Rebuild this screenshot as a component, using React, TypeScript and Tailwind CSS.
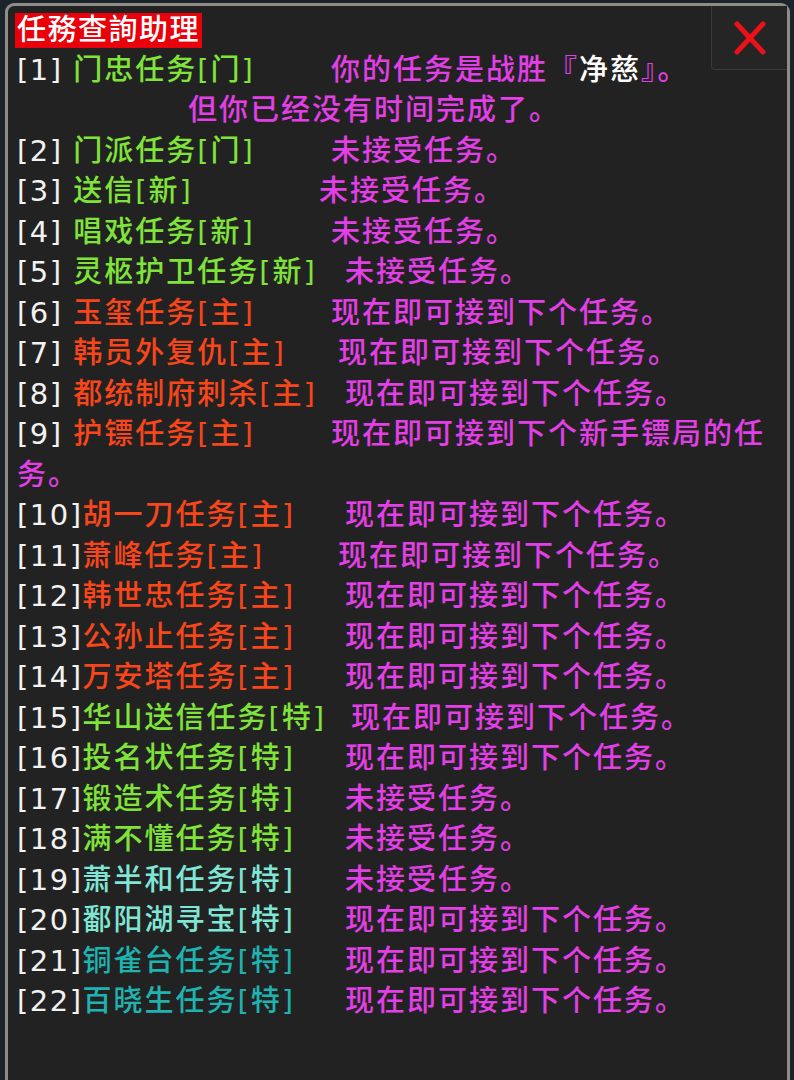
import type { ReactNode } from "react";

type Row = {
  no: string;
  name: string;
  tone: string;
  pad: string;
  status: ReactNode;
  more?: { text: string; indent: string };
};

const GREEN = "text-[#80e33a]";
const ORANGE = "text-[#f8461a]";
const AQUA = "text-[#7fe6d6]";
const TEAL = "text-[#1fb3b0]";

const NOT_TAKEN = "未接受任务。";
const NEXT = "现在即可接到下个任务。";

const rows: Row[] = [
  {
    no: "[1] ",
    name: "门忠任务[门]",
    tone: GREEN,
    pad: "w-[314px]",
    status: (
      <>
        你的任务是战胜『<span className="text-white">净慈</span>』。
      </>
    ),
    more: { text: "但你已经没有时间完成了。", indent: "pl-[171px]" },
  },
  { no: "[2] ", name: "门派任务[门]", tone: GREEN, pad: "w-[314px]", status: NOT_TAKEN },
  { no: "[3] ", name: "送信[新]", tone: GREEN, pad: "w-[302px]", status: NOT_TAKEN },
  { no: "[4] ", name: "唱戏任务[新]", tone: GREEN, pad: "w-[314px]", status: NOT_TAKEN },
  { no: "[5] ", name: "灵柩护卫任务[新]", tone: GREEN, pad: "w-[328px]", status: NOT_TAKEN },
  { no: "[6] ", name: "玉玺任务[主]", tone: ORANGE, pad: "w-[314px]", status: NEXT },
  { no: "[7] ", name: "韩员外复仇[主]", tone: ORANGE, pad: "w-[321px]", status: NEXT },
  { no: "[8] ", name: "都统制府刺杀[主]", tone: ORANGE, pad: "w-[328px]", status: NEXT },
  {
    no: "[9] ",
    name: "护镖任务[主]",
    tone: ORANGE,
    pad: "w-[314px]",
    status: "现在即可接到下个新手镖局的任",
    more: { text: "务。", indent: "pl-0" },
  },
  { no: "[10]", name: "胡一刀任务[主]", tone: ORANGE, pad: "w-[328px]", status: NEXT },
  { no: "[11]", name: "萧峰任务[主]", tone: ORANGE, pad: "w-[321px]", status: NEXT },
  { no: "[12]", name: "韩世忠任务[主]", tone: ORANGE, pad: "w-[328px]", status: NEXT },
  { no: "[13]", name: "公孙止任务[主]", tone: ORANGE, pad: "w-[328px]", status: NEXT },
  { no: "[14]", name: "万安塔任务[主]", tone: ORANGE, pad: "w-[328px]", status: NEXT },
  { no: "[15]", name: "华山送信任务[特]", tone: GREEN, pad: "w-[334px]", status: NEXT },
  { no: "[16]", name: "投名状任务[特]", tone: GREEN, pad: "w-[328px]", status: NEXT },
  { no: "[17]", name: "锻造术任务[特]", tone: GREEN, pad: "w-[328px]", status: NOT_TAKEN },
  { no: "[18]", name: "满不懂任务[特]", tone: GREEN, pad: "w-[328px]", status: NOT_TAKEN },
  { no: "[19]", name: "萧半和任务[特]", tone: AQUA, pad: "w-[328px]", status: NOT_TAKEN },
  { no: "[20]", name: "鄱阳湖寻宝[特]", tone: AQUA, pad: "w-[328px]", status: NEXT },
  { no: "[21]", name: "铜雀台任务[特]", tone: TEAL, pad: "w-[328px]", status: NEXT },
  { no: "[22]", name: "百晓生任务[特]", tone: TEAL, pad: "w-[328px]", status: NEXT },
];

function CloseButton() {
  return (
    <button className="flex h-[64px] w-[76px] items-center justify-center rounded-bl-[4px] border-b border-l border-[#3a3a3a] bg-[#252525]">
      <svg width="34" height="36" viewBox="0 0 34 36" fill="none">
        <path d="M4 4 L30 32 M30 4 L4 32" stroke="#ea1119" strokeWidth="5" strokeLinecap="round" />
      </svg>
    </button>
  );
}

export default function App() {
  return (
    <div className="h-[1080px] overflow-hidden bg-[#1b232b] pl-[5px] pr-[4px] pt-[3px]">
      <div className="relative h-[1100px] rounded-t-[9px] border-[3px] border-b-0 border-[#8d8d85] bg-[#222222] font-['DejaVu_Sans','Noto_Sans_CJK_SC',sans-serif] text-[29px] font-medium tracking-[2px] text-[#e23fe6]">
        <div className="absolute right-0 top-0">
          <CloseButton />
        </div>

        <div className="pl-[9px] pr-[7px] pt-[7px]">
          <h1 className="-ml-[2px] w-fit bg-[#e8000b] px-[2px] text-[29px] leading-[35px] font-medium tracking-[1.5px] text-white">
            任務查詢助理
          </h1>

          <div className="mt-[2px]">
            {rows.map((row) => (
              <div key={row.no}>
                <div className="flex h-[40.5px] items-center whitespace-nowrap">
                  <div className={`${row.pad} shrink-0`}>
                    <span className="whitespace-pre font-normal tracking-[1.5px] text-[#f2f2f2]">{row.no}</span>
                    <span className={row.tone}>{row.name}</span>
                  </div>
                  <div>{row.status}</div>
                </div>
                {row.more && (
                  <div className={`flex h-[40.5px] items-center whitespace-nowrap ${row.more.indent}`}>
                    {row.more.text}
                  </div>
                )}
              </div>
            ))}
          </div>
        </div>
      </div>
    </div>
  );
}
